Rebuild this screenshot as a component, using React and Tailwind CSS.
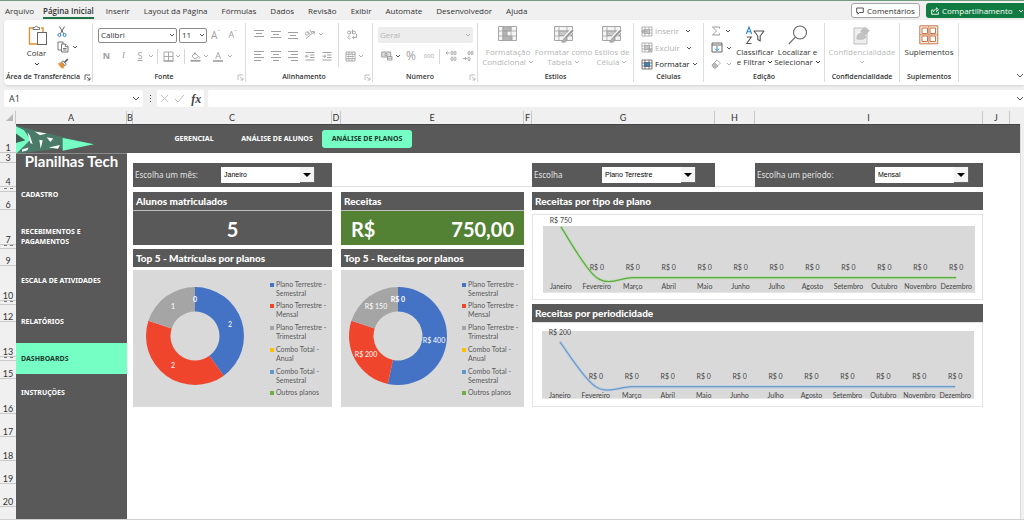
import React from 'react';

const SHEET_FONT = "font-['Lato','Noto_Sans',sans-serif]";

const menuTabs = ['Inserir', 'Layout da Página', 'Fórmulas', 'Dados', 'Revisão', 'Exibir', 'Automate', 'Desenvolvedor', 'Ajuda'];

// Rows without a number are collapsed too far for it to be readable
const sheetRows = [
  { n: 1, h: 'h-[29px]' },
  { n: 3, h: 'h-[10px]' },
  { n: 4, h: 'h-[24px]' },
  { h: 'h-[5px]' },
  { n: 6, h: 'h-[18px]' },
  { n: 7, h: 'h-[35px]' },
  { h: 'h-[4px]' },
  { n: 9, h: 'h-[17px]' },
  { n: 10, h: 'h-[35px]' },
  { h: 'h-[4px]' },
  { n: 12, h: 'h-[17px]' },
  { n: 13, h: 'h-[35px]' },
  { h: 'h-[4px]' },
  { n: 15, h: 'h-[18px]' },
  { n: 16, h: 'h-[35px]' },
  { n: 17, h: 'h-[23px]' },
  { n: 18, h: 'h-[24px]' },
  { n: 19, h: 'h-[23px]' },
  { n: 20, h: 'h-[23px]' },
];

const sideItems = [
  { label: 'CADASTRO', h: 'h-[34px]' },
  { label: 'RECEBIMENTOS E PAGAMENTOS', h: 'h-[49px]' },
  { label: 'ESCALA DE ATIVIDADES', h: 'h-[40px]' },
  { label: 'RELATÓRIOS', h: 'h-[42px]' },
  { label: 'DASHBOARDS', h: 'h-[31px]', active: true },
  { label: 'INSTRUÇÕES', h: 'h-[38px]' },
];

const months = ['Janeiro', 'Fevereiro', 'Março', 'Abril', 'Maio', 'Junho', 'Julho', 'Agosto', 'Setembro', 'Outubro', 'Novembro', 'Dezembro'];

const plans = [
  { name: 'Plano Terrestre - Semestral', color: '#4472c4' },
  { name: 'Plano Terrestre - Mensal', color: '#f0452d' },
  { name: 'Plano Terrestre - Trimestral', color: '#a5a5a5' },
  { name: 'Combo Total - Anual', color: '#ffc000' },
  { name: 'Combo Total - Semestral', color: '#5b9bd5' },
  { name: 'Outros planos', color: '#70ad47' },
];

/* ---------- small helpers ---------- */

const Chevron = ({ className = 'text-[#555]' }) => (
  <svg viewBox="0 0 6 4" className={`inline-block w-[6px] h-[4px] shrink-0 ${className}`} fill="none" stroke="currentColor" strokeWidth="1">
    <path d="M1 1l2 2 2-2" />
  </svg>
);

const WideChevron = () => (
  <svg viewBox="0 0 8 5" className="w-[8px] h-[5px] shrink-0 text-[#555]" fill="none" stroke="currentColor" strokeWidth="1">
    <path d="M1 1l3 3 3-3" />
  </svg>
);

const Launcher = ({ dim }) => (
  <svg viewBox="0 0 7 7" className={`w-[7px] h-[7px] ${dim ? 'text-[#b5b5b5]' : 'text-[#555]'}`} fill="none" stroke="currentColor" strokeWidth="0.9">
    <path d="M1 6V1h5M3 3l3 3M6 3.5V6H3.5" />
  </svg>
);

const Group = ({ title, width, launcher, dim = true, children }) => (
  <section className={`${width} shrink-0 flex flex-col border-r border-[#dcdcdc] my-[3px] relative`}>
    <div className="h-[49px] flex">{children}</div>
    <h2 className={`h-[10px] leading-[10px] text-center text-[7px] font-semibold text-[#333] whitespace-nowrap ${launcher ? 'pr-[10px]' : ''}`}>{title}</h2>
    {launcher && (
      <button aria-label={`Opções de ${title}`} className="absolute right-[1px] bottom-[1px]">
        <Launcher dim={dim} />
      </button>
    )}
  </section>
);

const Tool = ({ label, className = 'w-[17px]', children }) => (
  <button aria-label={label} className={`${className} h-[16px] shrink-0 flex items-center justify-center text-[#a0a0a0]`}>
    {children}
  </button>
);

const BigTool = ({ icon, lines, chevron, dim, className }) => (
  <button className={`${className} shrink-0 flex flex-col items-center text-[8px] leading-[10px] whitespace-nowrap ${dim ? 'text-[#b5b5b5]' : 'text-[#333]'}`}>
    <span className="h-[24px] flex items-center justify-center">{icon}</span>
    {lines.map((line, i) => (
      <span key={line} className="flex items-center gap-[2px]">
        {line}
        {chevron && i === lines.length - 1 && <Chevron className="text-current" />}
      </span>
    ))}
  </button>
);

/* ---------- ribbon icons ---------- */

const Lines = ({ rows }) => (
  <svg viewBox="0 0 10 10" className="w-[10px] h-[10px]" stroke="currentColor" strokeWidth="1">
    {rows.map(([x1, x2, y], i) => <line key={i} x1={x1} x2={x2} y1={y} y2={y} />)}
  </svg>
);

const PasteIcon = () => (
  <svg viewBox="0 0 20 21" className="w-[20px] h-[21px]" fill="none">
    <path d="M5 3H1.5v16H9M13 3h2v4" stroke="#e0912f" strokeWidth="1.4" />
    <path d="M5 4.500V2.500h1.800C7 .8 9.500.8 9.700 2.500h1.800v2z" stroke="#777" fill="#fff" />
    <rect x="9.500" y="7.500" width="9" height="12" stroke="#666" fill="#fff" />
  </svg>
);

const CutIcon = () => (
  <svg viewBox="0 0 10 11" className="w-[10px] h-[11px]" fill="none">
    <path d="M2.500.5l4.200 7.200M7.500.5L3.300 7.700" stroke="#555" strokeWidth="0.9" />
    <circle cx="2.400" cy="9" r="1.500" stroke="#2e86c9" />
    <circle cx="7.600" cy="9" r="1.500" stroke="#2e86c9" />
  </svg>
);

const CopyIcon = () => (
  <svg viewBox="0 0 12 12" className="w-[12px] h-[12px]" fill="#fff" stroke="#666" strokeWidth="0.9">
    <path d="M1 1h5v8H1z" />
    <path d="M4.500 3h4l2.500 2.500V11H4.500z" />
    <path d="M8.300 3v2.700H11M6 7.500h3.500M6 9h3.500" />
  </svg>
);

const BrushIcon = () => (
  <svg viewBox="0 0 12 11" className="w-[12px] h-[11px]">
    <path d="M1 5.500l3.500-1.500 3.500 3.500-2 3.200C4 9.800 2 8.200 1 5.500z" fill="#e8953a" />
    <path d="M4.500 4l1.300-1.300 3.600 3.600L8 7.500z" fill="#fff" stroke="#555" strokeWidth="0.8" />
    <path d="M7.500 4.500L10.800 1" stroke="#555" strokeWidth="1.600" />
  </svg>
);

const BordersIcon = () => (
  <svg viewBox="0 0 11 11" className="w-[11px] h-[11px]" fill="none" stroke="currentColor">
    <path d="M1 1h9v9H1zM5.500 1v9M1 5.500h9" strokeWidth="0.9" />
    <path d="M0.500 10h10" strokeWidth="1.300" />
  </svg>
);

const BucketIcon = () => (
  <svg viewBox="0 0 11 11" className="w-[11px] h-[11px]" fill="none" stroke="currentColor" strokeWidth="0.9">
    <path d="M5 1v3M2 5l3-3 3.500 3.500L5 8z" />
    <path d="M9.300 5.500c.8 1 .8 1.800 0 2" />
    <path d="M0.500 9.800h10" strokeWidth="1.800" />
  </svg>
);

const OrientIcon = () => (
  <svg viewBox="0 0 12 11" className="w-[12px] h-[11px]" fill="none" stroke="currentColor" strokeWidth="0.9">
    <path d="M2 9.500L10 3M7.500 2.500L10.500 2.600 10 5.500" />
    <circle cx="3" cy="4.500" r="1.600" />
    <path d="M4.200 2.500l1.700 3M6 1l2 3.300" />
  </svg>
);

const WrapIcon = () => (
  <svg viewBox="0 0 12 11" className="w-[12px] h-[11px]" fill="none" stroke="currentColor" strokeWidth="0.9">
    <circle cx="3" cy="3.500" r="1.500" />
    <path d="M4.700 2v3M6.500 0.500v4.500" />
    <circle cx="8" cy="3.500" r="1.500" />
    <path d="M4.500 7.300a1.500 1.500 0 1 0 0 2.200M10.500 5v3.500H6.500M8 7L6.500 8.500 8 10" />
  </svg>
);

const MergeIcon = () => (
  <svg viewBox="0 0 11 11" className="w-[11px] h-[11px]" fill="none" stroke="currentColor" strokeWidth="0.9">
    <path d="M1 1h9v9H1zM1 3.300h9M1 7.700h9M4 1v2.300M7 1v2.300M4 7.700V10M7 7.700V10M2.500 5.500h6M3.500 4.500l-1 1 1 1M7.500 4.500l1 1-1 1" />
  </svg>
);

const IndentIcon = ({ flip }) => (
  <svg viewBox="0 0 10 10" className="w-[10px] h-[10px]" fill="none" stroke="currentColor" strokeWidth="1">
    <path d="M0.500 1.500h9M5 4h4.500M5 6.500h4.500M0.500 9h9" />
    <path d={flip ? 'M0.500 5.200h3M2.300 3.700l1.500 1.500-1.500 1.500' : 'M0.500 5.200h3M2 3.700L.5 5.200 2 6.700'} />
  </svg>
);

const MoneyIcon = () => (
  <svg viewBox="0 0 12 10" className="w-[12px] h-[10px]" fill="none" stroke="currentColor" strokeWidth="1">
    <path d="M.7 1h9v5h-9z" fill="#ddd" />
    <circle cx="5" cy="3.500" r="1.200" />
    <path d="M6.500 5.500h4.500v3.500H6.500zM6.500 7.200h4.500" fill="#fff" />
  </svg>
);

const DecimalIcon = ({ flip }) => (
  <svg viewBox="0 0 12 12" className="w-[12px] h-[12px]" fill="none" stroke="currentColor" strokeWidth="0.9">
    {flip ? <path d="M1 8.500h3.500M3 7l1.500 1.500L3 10" /> : <path d="M1 3h3.500M2.500 1.500L1 3l1.500 1.500" />}
    <ellipse cx="7" cy="3" rx="1" ry="1.900" />
    <ellipse cx="10" cy="3" rx="1" ry="1.900" />
    <ellipse cx="7" cy="8.800" rx="1" ry="1.900" />
    {!flip && <ellipse cx="10" cy="8.800" rx="1" ry="1.900" />}
  </svg>
);

const TableIcon = ({ brush, cond }) => (
  <svg viewBox="0 0 20 18" className="w-[20px] h-[18px]" fill="none" stroke="#a6a6a6">
    <path d="M.5.500h18v14H.500z" fill="#f4f4f4" />
    {cond ? (
      <path d="M5 .5h8v4.500H5zM5 5h4v5H5zM5 10h9v4.500H5z" fill="#b4b4b4" />
    ) : (
      <path d="M5 5h13.500v4.500H5z" fill="#c8c8c8" />
    )}
    <path d="M.5 5h18M.5 10h18M5 .5v14M13 .5v14" strokeWidth="0.8" />
    {brush && (
      <>
        <path d="M19 3.500L11 12" stroke="#fff" strokeWidth="4" />
        <path d="M19 4l-7.500 8" stroke="#999" strokeWidth="2" />
        <path d="M11.500 11.500c-2 0-2 3-4 4.500 3 1 6-.5 5.500-3z" fill="#b0b0b0" stroke="#999" strokeWidth="0.8" />
      </>
    )}
  </svg>
);

const CellsIcon = ({ color, fill, mark }) => (
  <svg viewBox="0 0 12 11" className="w-[12px] h-[11px]" fill="none" stroke={color} strokeWidth="0.9">
    <path d="M1 1h10v9H1zM1 4h10M1 7h10M4 1v9M8 1v9" />
    <path d="M3.500 3.500h5v4h-5z" fill={fill} />
    {mark && <path d={mark} strokeWidth="1.200" />}
  </svg>
);

const SigmaIcon = () => (
  <svg viewBox="0 0 10 10" className="w-[10px] h-[10px]" fill="none" stroke="#9b9b9b" strokeWidth="1">
    <path d="M8.500 2.500V1H1.500l4 4-4 4h7V7.500" />
  </svg>
);

const FillIcon = () => (
  <svg viewBox="0 0 12 11" className="w-[12px] h-[11px]" fill="none" strokeWidth="1">
    <path d="M1 1h10v9H1zM1 3h10" stroke="#666" />
    <path d="M6 4v4.500M4 6.700l2 2 2-2" stroke="#2e86c9" />
  </svg>
);

const EraserIcon = () => (
  <svg viewBox="0 0 11 10" className="w-[11px] h-[10px]" fill="none" stroke="#aaa" strokeWidth="0.9">
    <path d="M1 6l5-5 3.500 3-5 5H3z" />
    <path d="M3.500 3.500L7 7 4.500 9H3L1 6z" fill="#bbb" />
  </svg>
);

const SortIcon = () => (
  <svg viewBox="0 0 20 19" className="w-[20px] h-[19px]" fill="none" strokeWidth="1.100">
    <path d="M1.300 8L4 1l2.700 7M2.200 5.800h3.600" stroke="#2e86c9" />
    <path d="M1.700 11h4.600l-4.600 6.500h4.800" stroke="#555" />
    <path d="M9 5h10l-3.800 5v5l-2.400-1.500V10z" stroke="#555" fill="#fff" strokeLinejoin="round" />
  </svg>
);

const SearchIcon = () => (
  <svg viewBox="0 0 20 20" className="w-[20px] h-[20px]" fill="none" stroke="#666" strokeWidth="1.100">
    <circle cx="12" cy="7.500" r="6.500" />
    <path d="M7.300 12.200L.8 19" />
  </svg>
);

const SensitivityIcon = () => (
  <svg viewBox="0 0 18 19" className="w-[18px] h-[19px]" fill="none" stroke="#bdbdbd">
    <path d="M1 2h13v16H1z" fill="#eee" />
    <path d="M4 13c0-4 1-5 4-6l5 4c-2 2.500-4 2.500-9 2z" fill="#c4c4c4" />
    <path d="M8 6l4-4M11 9l5-5M9.500 7.500L14 3" strokeWidth="2" />
  </svg>
);

const AddinsIcon = () => (
  <svg viewBox="0 0 20 20" className="w-[20px] h-[20px]" fill="#fff" stroke="#cb7749" strokeWidth="1">
    <path d="M.8.800h18v18h-18z" fill="#fbeee6" />
    <path d="M3 3h5.500v5.500H3zM11 3h5.500v5.500H11zM3 11h5.500v5.500H3zM11 11h5.500v5.500H11z" />
    <path d="M.8 9.800h18M9.800.800v18" strokeWidth="0.8" />
  </svg>
);

/* ---------- ribbon ---------- */

const TitleTabs = () => (
  <header className="h-[20px] border-t border-[#6f9c7f] flex items-center text-[8px] text-[#333]">
    <nav className="flex items-center gap-[14px] pl-[5px] whitespace-nowrap">
      <a href="#arquivo" className="-mr-[5px]">Arquivo</a>
      <a href="#inicio" className="font-semibold border-b-2 border-[#217346] leading-[13px] mt-[2px] -mr-[2px]">Página Inicial</a>
      {menuTabs.map((tab) => (
        <a key={tab} href={`#${tab}`}>{tab}</a>
      ))}
    </nav>
    <div className="ml-auto flex gap-[6px]">
      <button className="h-[15px] w-[69px] flex items-center justify-center gap-[3px] bg-white border border-[#a5a5a5] rounded-[3px]">
        <svg viewBox="0 0 8 8" className="w-[8px] h-[8px]" fill="none" stroke="#444" strokeWidth="0.9">
          <path d="M.7 1h6.600v4.500H3.500L2 7.200V5.500H.7z" />
        </svg>
        Comentários
      </button>
      <button className="h-[15px] w-[98px] flex items-center pl-[5px] gap-[3px] bg-[#107c41] text-white rounded-l-[3px]">
        <svg viewBox="0 0 8 8" className="w-[8px] h-[8px]" fill="none" stroke="#fff" strokeWidth="0.9">
          <path d="M2.500 3H.7v4.300h6.600V5M2.500 5C2.700 3 4 2.200 5.500 2.200V.8L7.500 2.700 5.500 4.500V3.300" />
        </svg>
        Compartilhamento
        <Chevron className="text-white ml-auto" />
      </button>
    </div>
  </header>
);

const Ribbon = () => (
  <div className="ml-[4px] h-[65px] bg-white rounded-l-[4px] shadow-sm flex relative">
    <Group title="Área de Transferência" width="w-[89px]" launcher dim={false}>
      <button className="w-[41px] ml-[12px] flex flex-col items-center text-[8px] leading-[10px] text-[#333]">
        <span className="h-[25px] flex items-center pl-[2px]"><PasteIcon /></span>
        Colar
        <Chevron className="mt-[4px]" />
      </button>
      <div className="flex flex-col">
        <button aria-label="Recortar" className="h-[16px] flex items-center"><CutIcon /></button>
        <button aria-label="Copiar" className="h-[16px] flex items-center gap-[3px]"><CopyIcon /><Chevron /></button>
        <button aria-label="Pincel de Formatação" className="h-[16px] flex items-center"><BrushIcon /></button>
      </div>
    </Group>

    <Group title="Fonte" width="w-[153px]" launcher>
      <div className="pl-[5px] pt-[4px] flex flex-col gap-[5px]">
        <div className="flex items-center text-[8px] text-[#333]">
          <div className="relative">
            <select aria-label="Fonte" className="block appearance-none w-[79px] h-[15px] pl-[2px] bg-white border border-[#8a8a8a] rounded-[2px]">
              <option>Calibri</option>
            </select>
            <span className="absolute right-[2px] top-0 h-full flex items-center pointer-events-none"><Chevron /></span>
          </div>
          <div className="relative ml-[2px]">
            <select aria-label="Tamanho da fonte" className="block appearance-none w-[28px] h-[15px] pl-[2px] bg-white border border-[#8a8a8a] rounded-[2px]">
              <option>11</option>
            </select>
            <span className="absolute right-[2px] top-0 h-full flex items-center pointer-events-none"><Chevron /></span>
          </div>
          <Tool label="Aumentar fonte"><span className="text-[10px]">A</span><span className="text-[6px] mb-[5px]">ˆ</span></Tool>
          <Tool label="Diminuir fonte"><span className="text-[9px]">A</span><span className="text-[6px] mb-[5px]">ˇ</span></Tool>
        </div>
        <div className="flex items-center">
          <Tool label="Negrito"><span className="text-[9px] font-bold">N</span></Tool>
          <Tool label="Itálico"><span className="text-[9px] italic font-['Liberation_Serif',serif]">I</span></Tool>
          <Tool label="Sublinhado" className="w-[16px]"><span className="text-[9px] underline">S</span></Tool>
          <Chevron className="text-[#b0b0b0]" />
          <span className="w-px h-[15px] bg-[#d8d8d8] mx-[3px]" />
          <Tool label="Bordas" className="w-[14px]"><BordersIcon /></Tool>
          <Chevron className="text-[#b0b0b0]" />
          <span className="w-px h-[15px] bg-[#d8d8d8] mx-[3px]" />
          <Tool label="Cor de preenchimento" className="w-[15px]"><BucketIcon /></Tool>
          <Chevron className="text-[#b0b0b0]" />
          <Tool label="Cor da fonte" className="w-[18px]"><span className="text-[9px] leading-[9px] border-b-2 border-[#b0b0b0] px-[2px]">A</span></Tool>
          <Chevron className="text-[#b0b0b0]" />
        </div>
      </div>
    </Group>

    <Group title="Alinhamento" width="w-[127px]" launcher>
      <div className="pl-[4px] pt-[3px] flex flex-col gap-[6px] w-[92px]">
        <div className="flex items-center">
          <Tool label="Alinhar em cima"><Lines rows={[[0, 10, 1.5], [2, 8, 4.5], [0, 10, 7.5]]} /></Tool>
          <Tool label="Alinhar no meio"><Lines rows={[[0, 10, 2.5], [2, 8, 5.5], [0, 10, 8.5]]} /></Tool>
          <Tool label="Alinhar embaixo"><Lines rows={[[0, 10, 3.5], [2, 8, 6.5], [0, 10, 9.5]]} /></Tool>
          <Tool label="Orientação"><OrientIcon /></Tool>
          <Chevron className="text-[#b0b0b0]" />
        </div>
        <div className="flex items-center">
          <Tool label="Alinhar à esquerda"><Lines rows={[[0, 10, 0.5], [0, 7, 3.5], [0, 10, 6.5], [0, 7, 9.5]]} /></Tool>
          <Tool label="Centralizar"><Lines rows={[[0, 10, 0.5], [2, 8, 3.5], [0, 10, 6.5], [2, 8, 9.5]]} /></Tool>
          <Tool label="Alinhar à direita"><Lines rows={[[0, 10, 0.5], [3, 10, 3.5], [0, 10, 6.5], [3, 10, 9.5]]} /></Tool>
          <Tool label="Diminuir recuo"><IndentIcon /></Tool>
          <Tool label="Aumentar recuo"><IndentIcon flip /></Tool>
        </div>
      </div>
      <div className="border-l border-[#d8d8d8] pl-[4px] pt-[3px] h-[44px] flex flex-col gap-[6px]">
        <Tool label="Quebrar texto"><WrapIcon /></Tool>
        <div className="flex items-center">
          <Tool label="Mesclar e centralizar" className="w-[15px]"><MergeIcon /></Tool>
          <Chevron className="text-[#b0b0b0]" />
        </div>
      </div>
    </Group>

    <Group title="Número" width="w-[105px]" launcher>
      <div className="pl-[5px] pt-[4px] flex flex-col gap-[5px]">
        <div className="relative w-[95px]">
          <select aria-label="Formato de número" className="block appearance-none w-full h-[16px] pl-[2px] text-[8px] text-[#b5b5b5] bg-[#ededed] rounded-[2px]">
            <option>Geral</option>
          </select>
          <span className="absolute right-[2px] top-0 h-full flex items-center pointer-events-none"><Chevron className="text-[#b0b0b0]" /></span>
        </div>
        <div className="flex items-center">
          <Tool label="Moeda"><MoneyIcon /></Tool>
          <Chevron />
          <Tool label="Porcentagem" className="w-[20px]"><span className="text-[12px]">%</span></Tool>
          <Tool label="Milhares" className="w-[16px]"><span className="text-[6px]">000</span></Tool>
          <span className="w-px h-[15px] bg-[#d8d8d8] mx-[2px]" />
          <Tool label="Aumentar casas decimais"><DecimalIcon /></Tool>
          <Tool label="Diminuir casas decimais"><DecimalIcon flip /></Tool>
        </div>
      </div>
    </Group>

    <Group title="Estilos" width="w-[156px]">
      <div className="flex pl-[3px]">
        <BigTool dim chevron className="w-[54px]" icon={<TableIcon cond />} lines={['Formatação', 'Condicional']} />
        <BigTool dim chevron className="w-[57px]" icon={<TableIcon brush />} lines={['Formatar como', 'Tabela']} />
        <BigTool dim chevron className="w-[40px]" icon={<TableIcon brush />} lines={['Estilos de', 'Célula']} />
      </div>
    </Group>

    <Group title="Células" width="w-[70px]">
      <div className="flex flex-col pl-[7px] text-[8px]">
        <button className="h-[16px] flex items-center gap-[2px] text-[#b0b0b0]">
          <CellsIcon color="#aaa" fill="#c4c4c4" mark="M6 5.500H1M2.500 4L1 5.500 2.500 7" />Inserir<Chevron className="ml-[4px] text-[#555]" />
        </button>
        <button className="h-[17px] flex items-center gap-[2px] text-[#b0b0b0]">
          <CellsIcon color="#aaa" fill="#c4c4c4" mark="M7 6l4 4M11 6l-4 4" />Excluir<Chevron className="ml-[4px] text-[#555]" />
        </button>
        <button className="h-[16px] flex items-center gap-[2px] text-[#222]">
          <CellsIcon color="#666" fill="#2e86c9" />Formatar<Chevron />
        </button>
      </div>
    </Group>

    <Group title="Edição" width="w-[121px]">
      <div className="flex flex-col pl-[7px] w-[30px]">
        <button aria-label="AutoSoma" className="h-[16px] flex items-center gap-[4px]"><SigmaIcon /><Chevron /></button>
        <button aria-label="Preencher" className="h-[17px] flex items-center gap-[3px]"><FillIcon /><Chevron /></button>
        <button aria-label="Limpar" className="h-[16px] flex items-center gap-[4px]"><EraserIcon /><Chevron className="text-[#b0b0b0]" /></button>
      </div>
      <BigTool chevron className="w-[42px]" icon={<SortIcon />} lines={['Classificar', 'e Filtrar']} />
      <BigTool chevron className="w-[43px]" icon={<SearchIcon />} lines={['Localizar e', 'Selecionar']} />
    </Group>

    <Group title="Confidencialidade" width="w-[75px]">
      <button className="w-full flex flex-col items-center text-[8px] leading-[10px] text-[#b9b9b9]">
        <span className="h-[24px] flex items-center"><SensitivityIcon /></span>
        Confidencialidade
        <Chevron className="mt-[3px] text-[#c0c0c0]" />
      </button>
    </Group>

    <Group title="Suplementos" width="w-[59px]">
      <BigTool className="w-full" icon={<AddinsIcon />} lines={['Suplementos']} />
    </Group>

    <button aria-label="Recolher faixa de opções" className="ml-auto mt-auto mb-[7px] flex">
      <WideChevron />
    </button>
  </div>
);

const FormulaBar = () => (
  <div className="mt-[5px] ml-[4px] h-[17px] flex items-center text-[9px] text-[#333]">
    <div className="relative w-[139px] h-full">
      <input aria-label="Caixa de nome" defaultValue="A1" className="block w-full h-full pl-[5px] bg-white rounded-[2px]" />
      <span className="absolute right-[3px] top-0 h-full flex items-center"><WideChevron /></span>
    </div>
    <span className="w-[14px] flex flex-col items-center gap-[2px]">
      <i className="w-px h-px bg-[#444]" />
      <i className="w-px h-px bg-[#444]" />
      <i className="w-px h-px bg-[#444]" />
    </span>
    <div className="w-[47px] h-full bg-white rounded-[2px] flex items-center justify-around">
      <button aria-label="Cancelar">
        <svg viewBox="0 0 10 10" className="w-[9px] h-[9px]" stroke="#bbb" fill="none"><path d="M1 1l8 8M9 1L1 9" /></svg>
      </button>
      <button aria-label="Inserir">
        <svg viewBox="0 0 11 9" className="w-[11px] h-[9px]" stroke="#bbb" fill="none"><path d="M1 5l3 3 6-7" /></svg>
      </button>
      <button aria-label="Inserir função" className="text-[12px] leading-[14px] italic font-bold text-[#444] font-['Liberation_Serif',serif]">fx</button>
    </div>
    <div className="relative flex-1 h-full ml-[4px]">
      <input aria-label="Barra de fórmulas" className="block w-full h-full bg-white rounded-l-[2px]" />
      <span className="absolute right-0 top-0 h-full flex items-center"><WideChevron /></span>
    </div>
  </div>
);

const ColumnHeads = () => (
  <div className={`mt-[4px] h-[13px] flex text-[9px] leading-[13px] text-center text-[#333] ${SHEET_FONT}`}>
    <div className="w-[16px] flex items-end justify-end pr-[2px] pb-[3px] border-r border-[#c8c8c8]">
      <svg viewBox="0 0 8 8" className="w-[7px] h-[7px]"><path d="M8 0v8H0z" fill="#b8b8b8" /></svg>
    </div>
    <div className="w-[111px] border-r border-[#c8c8c8]">A</div>
    <div className="w-[6px] border-r border-[#c8c8c8]">B</div>
    <div className="flex-1 grid grid-cols-[199fr_9fr_183fr_8fr_183fr_40fr_228fr]">
      {['C', 'D', 'E', 'F', 'G', 'H', 'I'].map((c) => (
        <div key={c} className="border-r border-[#c8c8c8]">{c}</div>
      ))}
    </div>
    <div className="w-[27px] border-r border-[#c8c8c8]">J</div>
    <div className="w-[14px]" />
  </div>
);

/* ---------- dashboard ---------- */

const Logo = () => (
  <svg viewBox="0 0 240 90" className="w-[80px] h-[29px]" preserveAspectRatio="none">
    <path d="M0 3l234 57L20 87 0 88z" fill="#4a7a68" />
    <path d="M0 4l24 12 19 30L2 88 0 88z" fill="#76ffc4" />
    <path d="M0 26l28 21L0 56z" fill="#3f5a50" />
    <path d="M140 40l94 20-94 20z" fill="#76ffc4" />
    <path d="M34 22l8 12 8 26-7-4zM56 20l36 6-20 6zM92 38l20 4-9 11zM70 46l10 2-6 26zM98 70l34-8-6 12zM18 76l20-6-4 8-16 5z" fill="#fff" />
  </svg>
);

const TopBar = () => (
  <div className="h-[29px] bg-[#595959] border-t border-[#444] flex items-center">
    <Logo />
    <nav className="ml-[70px] flex items-center text-[7px] font-bold text-white whitespace-nowrap font-['Noto_Sans',sans-serif]">
      <a href="#gerencial" className="w-[56px] text-center">GERENCIAL</a>
      <a href="#alunos" className="w-[90px] ml-[10px] text-center">ANÁLISE DE ALUNOS</a>
      <a href="#planos" className="w-[90px] h-[18px] leading-[18px] text-center rounded-[3px] bg-[#76ffc4] text-[#1c3b2f]">ANÁLISE DE PLANOS</a>
    </nav>
  </div>
);

const Sidebar = () => (
  <aside className="w-[111px] shrink-0 bg-[#595959] text-white border-t border-[#8a8a8a]">
    <h1 className="h-[24px] text-[15px] leading-[14px] font-bold text-center whitespace-nowrap">Planilhas Tech</h1>
    <nav className="flex flex-col text-[7px] leading-[10px] font-bold font-['Noto_Sans',sans-serif]">
      {sideItems.map((item) => (
        <a
          key={item.label}
          href={`#${item.label}`}
          className={`${item.h} flex items-center pl-[5px] pr-[20px] ${item.active ? 'bg-[#76ffc4] text-[#1c3b2f]' : ''}`}
        >
          {item.label}
        </a>
      ))}
    </nav>
  </aside>
);

const Filter = ({ id, label, value, pad }) => (
  <div className={`h-[24px] bg-[#595959] flex items-center justify-between pl-[2px] ${pad}`}>
    <label htmlFor={id} className="text-[8px] text-[#e2e2e2] whitespace-nowrap font-['Noto_Sans',sans-serif]">{label}</label>
    <div className="relative w-[94px] h-[16px]">
      <select id={id} className="block appearance-none w-full h-full pl-[3px] bg-white text-[7px] text-black font-['Liberation_Sans',sans-serif]">
        <option>{value}</option>
      </select>
      <span className="absolute right-0 top-0 w-[15px] h-full bg-[#f4f4f4] border-r border-b border-[#666] flex items-center justify-center pointer-events-none">
        <svg viewBox="0 0 8 4" className="w-[8px] h-[4px]"><path d="M0 0h8L4 4z" fill="#000" /></svg>
      </span>
    </div>
  </div>
);

const CardTitle = ({ children }) => (
  <h2 className="h-[18px] leading-[19px] pl-[3px] bg-[#595959] text-white text-[10px] font-black whitespace-nowrap">{children}</h2>
);

const polar = (cx, cy, r, turn) => {
  const a = turn * 2 * Math.PI - Math.PI / 2;
  return `${cx + r * Math.cos(a)} ${cy + r * Math.sin(a)}`;
};

const Donut = ({ slices, labels, width, cx }) => {
  const cy = 66;
  const total = slices.reduce((sum, s) => sum + s, 0);
  let start = 0;
  return (
    <div className="mt-[3px] h-[137px] bg-[#d9d9d9] flex items-center">
      <svg viewBox={`0 0 ${width} 137`} className="flex-1 min-w-0 h-[137px]">
        {slices.map((s, i) => {
          const a = start / total;
          start += s;
          const b = start / total;
          const big = b - a > 0.5 ? 1 : 0;
          return (
            <path
              key={i}
              fill={plans[i].color}
              d={`M${polar(cx, cy, 49, a)}A49 49 0 ${big} 1 ${polar(cx, cy, 49, b)}L${polar(cx, cy, 24.5, b)}A24.5 24.5 0 ${big} 0 ${polar(cx, cy, 24.5, a)}Z`}
            />
          );
        })}
        {labels.map(([text, x, y, bold]) => (
          <text key={`${text}${x}`} x={x} y={y} textAnchor="middle" fill="#fff" fontSize="7" fontWeight={bold ? 700 : 400}>{text}</text>
        ))}
      </svg>
      <ul className="w-[62px] h-[118px] flex flex-col justify-between text-[7px] leading-[9px] text-[#595959]">
        {plans.map((p) => (
          <li key={p.name} className="flex gap-[2px]">
            <i className="w-[4px] h-[4px] mt-[3px] shrink-0" style={{ backgroundColor: p.color }} />
            <span className="w-[54px]">{p.name}</span>
          </li>
        ))}
      </ul>
    </div>
  );
};

const LineChart = ({ first, top, base, plot, color, glow, label, labelY }) => {
  const step = 36.1;
  const x = (i) => first + step * i;
  const dy = base - top;
  return (
    <svg viewBox="0 0 451 84" className="block w-full bg-white border border-[#e3e3e3]">
      <rect x={plot.x} y={plot.y} width="434" height={plot.h} fill="#d9d9d9" />
      {[[glow, 3], [color, 1.2]].map(([stroke, w]) => (
        <path
          key={w}
          fill="none"
          stroke={stroke}
          strokeWidth={w}
          d={`M${x(0)} ${top}C${x(0) + 6} ${top + dy / 6} ${x(1) - 12} ${base - dy / 6} ${x(1)} ${base}S${x(2) - 12} ${base} ${x(2)} ${base}H${x(11)}`}
        />
      ))}
      {months.map((m, i) => (
        <g key={m} fontSize="7" fill="#444" textAnchor="middle">
          <text x={x(i)} y={i === 0 ? labelY : base - 8}>{i === 0 ? label : 'R$ 0'}</text>
          <text x={x(i)} y={base + 11}>{m}</text>
        </g>
      ))}
    </svg>
  );
};

const Dashboard = () => (
  <main className="flex-1 bg-white pt-[10px] pl-[6px] pr-[37px]">
    <div className="grid grid-cols-[199fr_9fr_183fr_8fr_183fr_40fr_228fr]">
      <Filter id="mes" label="Escolha um mês:" value="Janeiro" pad="pr-[17px]" />
      <div className="col-span-3 border-b border-[#dedede]" />
      <Filter id="plano" label="Escolha" value="Plano Terrestre" pad="pr-[19px]" />
      <div className="border-b border-[#dedede]" />
      <Filter id="periodo" label="Escolha um período:" value="Mensal" pad="pr-[14px]" />
    </div>

    <div className="mt-[5px] grid grid-cols-[199fr_9fr_183fr_8fr_451fr]">
      <div>
        <CardTitle>Alunos matriculados</CardTitle>
        <p className="h-[35px] leading-[36px] border-t border-[#bfbfbf] bg-[#595959] text-white text-center text-[20px] font-bold">5</p>
        <div className="mt-[4px]"><CardTitle>Top 5 - Matrículas por planos</CardTitle></div>
        <Donut
          width={137}
          cx={62}
          slices={[2, 2, 1]}
          labels={[['2', 97, 57], ['2', 40, 98], ['1', 40, 39], ['0', 62, 32, true]]}
        />
      </div>
      <div />
      <div>
        <CardTitle>Receitas</CardTitle>
        <p className="h-[35px] leading-[36px] border-t border-[#bfbfbf] bg-[#548235] text-white flex justify-between px-[10px] text-[20px] font-bold">
          <span>R$</span>
          <span>750,00</span>
        </p>
        <div className="mt-[4px]"><CardTitle>Top 5 - Receitas por planos</CardTitle></div>
        <Donut
          width={121}
          cx={57}
          slices={[400, 200, 150]}
          labels={[['R$ 400', 93, 73], ['R$ 200', 25, 87], ['R$ 150', 35, 39], ['R$ 0', 57, 32, true]]}
        />
      </div>
      <div />
      <div>
        <CardTitle>Receitas por tipo de plano</CardTitle>
        <div className="my-[4px]">
          <LineChart first={28} top={12} base={63} plot={{ x: 10, y: 11, h: 67 }} color="#5fa845" glow="#b9dcae" label="R$ 750" labelY={8} />
        </div>
        <CardTitle>Receitas por periodicidade</CardTitle>
        <LineChart first={27} top={19} base={64} plot={{ x: 9, y: 8, h: 68 }} color="#6f9ac8" glow="#bccfe2" label="R$ 200" labelY={12} />
      </div>
    </div>
  </main>
);

const App = () => (
  <div className="min-h-screen flex flex-col bg-[#f0f0f0] font-['Open_Sans','Noto_Sans',sans-serif]">
    <TitleTabs />
    <Ribbon />
    <FormulaBar />
    <ColumnHeads />
    <div className={`flex-1 flex border-b border-[#d0d0d0] ${SHEET_FONT}`}>
      <div className="w-[16px] shrink-0 text-[9px] leading-[9px] text-center text-[#333]">
        {sheetRows.map((row, i) => (
          <div key={i} className={`${row.h} flex items-end justify-center border-b border-[#c8c8c8]`}>
            {row.n || <i className="w-[9px] mb-[2px] border-t border-dashed border-[#777]" />}
          </div>
        ))}
      </div>
      <div className="flex-1 min-w-0 flex flex-col">
        <TopBar />
        <div className="flex-1 flex">
          <Sidebar />
          <Dashboard />
        </div>
      </div>
      <div className="w-[4px] shrink-0 border-l border-[#dcdcdc]" />
    </div>
  </div>
);

export default App;
